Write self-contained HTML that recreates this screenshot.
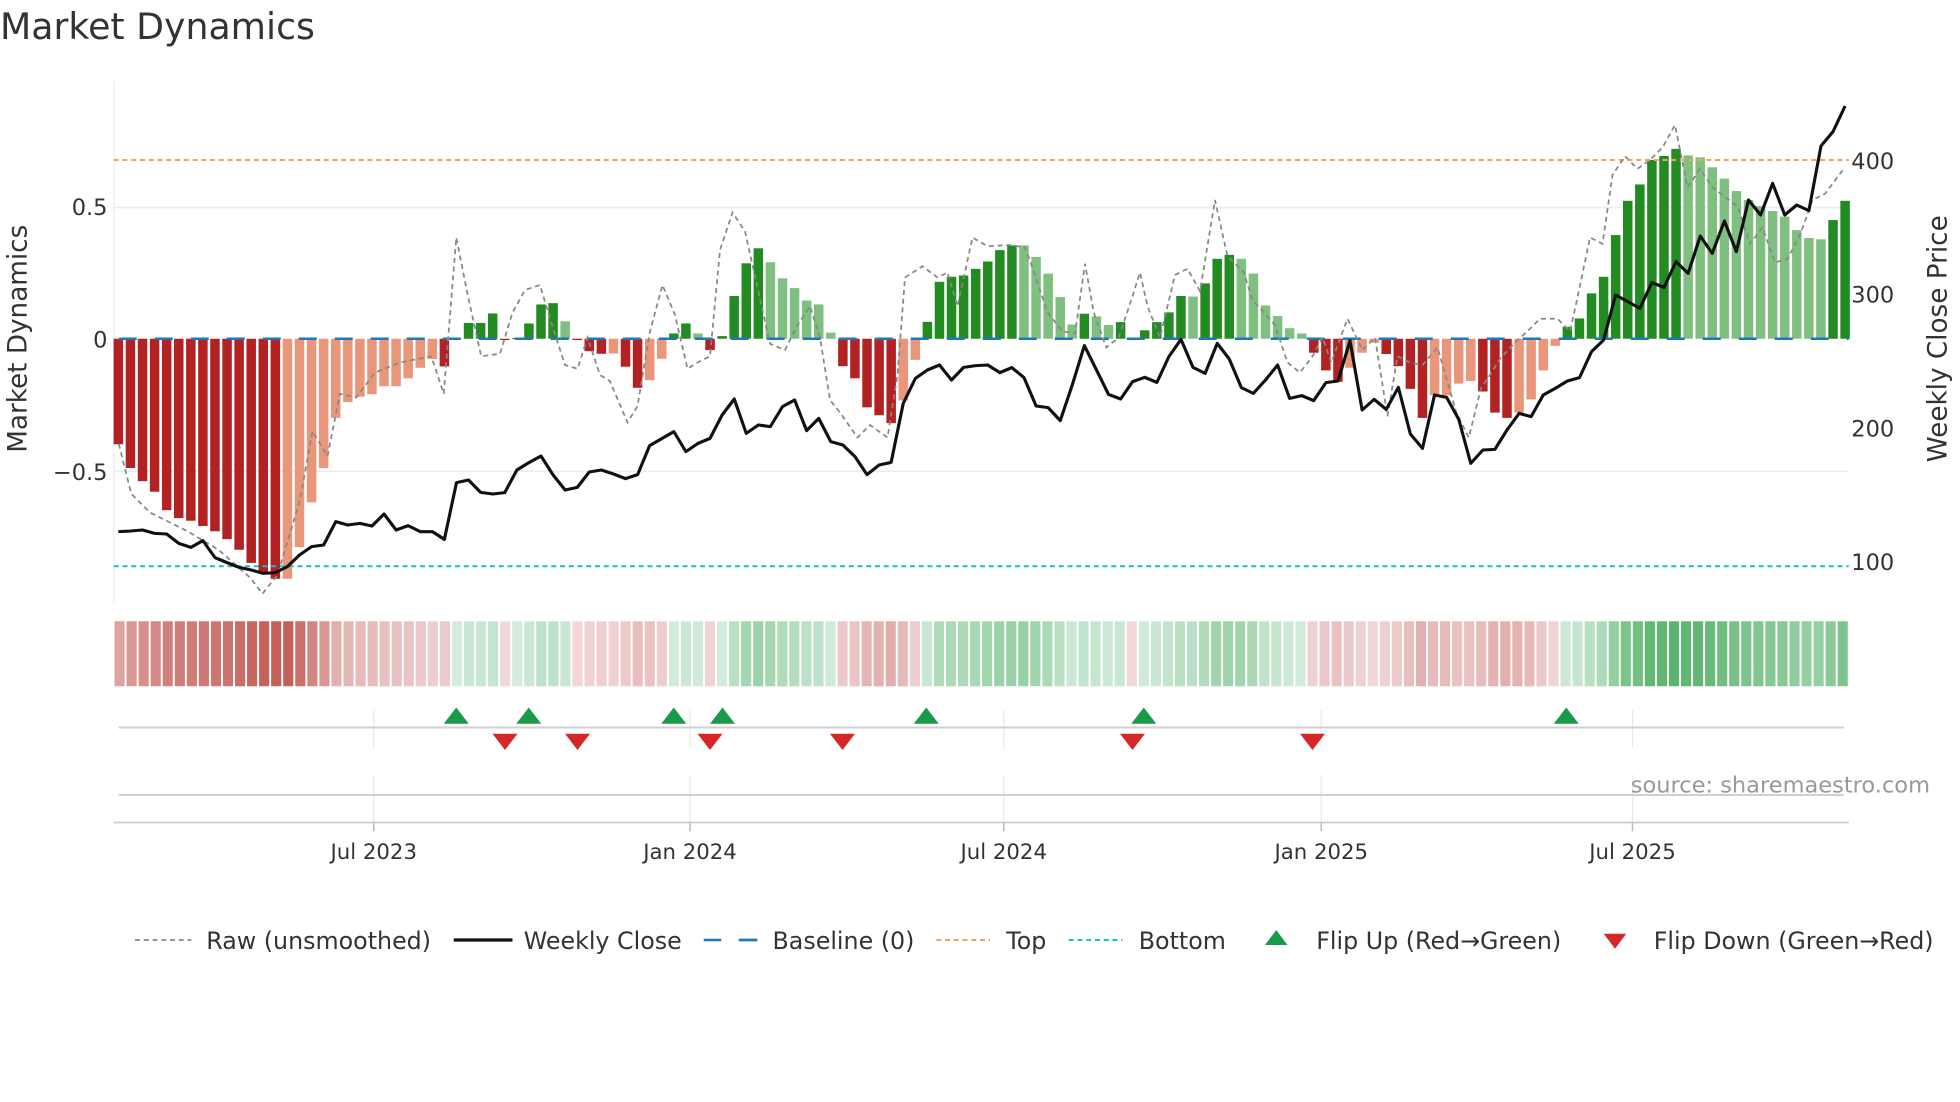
<!DOCTYPE html>
<html><head><meta charset="utf-8"><style>
html,body{margin:0;padding:0;background:#fff;}
svg{display:block;}
text{font-family:"DejaVu Sans","Liberation Sans",sans-serif;}
</style></head><body>
<svg id="s" width="1960" height="1102" viewBox="0 0 1568 881.6" preserveAspectRatio="none" xmlns="http://www.w3.org/2000/svg">
<rect width="1568" height="882" fill="#fff"/>
<text x="0" y="31" font-size="29" fill="#333">Market Dynamics</text>
<line x1="91" y1="65" x2="91" y2="482" stroke="#eeeeee" stroke-width="1"/>
<line x1="91" y1="166" x2="1479" y2="166" stroke="#ececec" stroke-width="1.3"/>
<line x1="91" y1="377" x2="1479" y2="377" stroke="#ececec" stroke-width="1.3"/>
<g id="bars"></g>
<line x1="91" y1="271" x2="1479" y2="271" stroke="#1f77b4" stroke-width="2" stroke-dasharray="14.4 14.4" stroke-dashoffset="-4"/>
<line x1="91" y1="128" x2="1479" y2="128" stroke="#f4a261" stroke-width="1.6" stroke-dasharray="4 3"/>
<line x1="91" y1="453" x2="1479" y2="453" stroke="#17becf" stroke-width="1.6" stroke-dasharray="4 3"/>
<path id="raw" fill="none" stroke="#888" stroke-width="1.4" stroke-dasharray="4 3"/>
<path id="close" fill="none" stroke="#111" stroke-width="2.5" stroke-linejoin="round"/>
<g font-size="18" fill="#333">
<text x="86" y="172" text-anchor="end">0.5</text>
<text x="86" y="278" text-anchor="end">0</text>
<text x="86" y="384" text-anchor="end">−0.5</text>
<text x="1481" y="135">400</text>
<text x="1481" y="242">300</text>
<text x="1481" y="349">200</text>
<text x="1481" y="456">100</text>
</g>
<text transform="translate(21,271) rotate(-90)" font-size="21" fill="#333" text-anchor="middle">Market Dynamics</text>
<text transform="translate(1557,271) rotate(-90)" font-size="21" fill="#333" text-anchor="middle">Weekly Close Price</text>
<g id="strip"></g>
<g stroke="#e8e8e8" stroke-width="1">
<line x1="299" y1="568" x2="299" y2="598"/><line x1="552" y1="568" x2="552" y2="598"/><line x1="803" y1="568" x2="803" y2="598"/><line x1="1057" y1="568" x2="1057" y2="598"/><line x1="1306" y1="568" x2="1306" y2="598"/>
<line x1="299" y1="620" x2="299" y2="658"/><line x1="552" y1="620" x2="552" y2="658"/><line x1="803" y1="620" x2="803" y2="658"/><line x1="1057" y1="620" x2="1057" y2="658"/><line x1="1306" y1="620" x2="1306" y2="658"/>
</g>
<line x1="95" y1="582" x2="1475" y2="582" stroke="#d0d0d0" stroke-width="1.6"/>
<line x1="95" y1="636" x2="1475" y2="636" stroke="#d0d0d0" stroke-width="1.6"/>
<line x1="91" y1="658" x2="1479" y2="658" stroke="#cccccc" stroke-width="1.4"/>
<g stroke="#bbb" stroke-width="1.2">
<line x1="299" y1="658" x2="299" y2="665"/><line x1="552" y1="658" x2="552" y2="665"/><line x1="803" y1="658" x2="803" y2="665"/><line x1="1057" y1="658" x2="1057" y2="665"/><line x1="1306" y1="658" x2="1306" y2="665"/>
</g>
<g id="tri"></g>
<text x="1544" y="634" font-size="18" fill="#999" text-anchor="end">source: sharemaestro.com</text>
<g font-size="17" fill="#333" text-anchor="middle">
<text x="299" y="687">Jul 2023</text><text x="552" y="687">Jan 2024</text><text x="803" y="687">Jul 2024</text><text x="1057" y="687">Jan 2025</text><text x="1306" y="687">Jul 2025</text>
</g>
<g font-size="19" fill="#333">
<line x1="108" y1="752" x2="153" y2="752" stroke="#888" stroke-width="1.4" stroke-dasharray="4 3"/>
<text x="165" y="759">Raw (unsmoothed)</text>
<line x1="363" y1="752" x2="410" y2="752" stroke="#111" stroke-width="2.6"/>
<text x="419" y="759">Weekly Close</text>
<line x1="563" y1="752" x2="606" y2="752" stroke="#1f77b4" stroke-width="2" stroke-dasharray="14 14"/>
<line x1="592" y1="752" x2="606" y2="752" stroke="#1f77b4" stroke-width="2"/>
<text x="618" y="759">Baseline (0)</text>
<line x1="749" y1="752" x2="792" y2="752" stroke="#f4a261" stroke-width="1.6" stroke-dasharray="4 3"/>
<text x="805" y="759">Top</text>
<line x1="855" y1="752" x2="898" y2="752" stroke="#17becf" stroke-width="1.6" stroke-dasharray="4 3"/>
<text x="911" y="759">Bottom</text>
<polygon points="1012,756 1030,756 1021,744" fill="#1a9a48"/>
<text x="1053" y="759">Flip Up (Red→Green)</text>
<polygon points="1283,747 1301,747 1292,759" fill="#d62728"/>
<text x="1323" y="759">Flip Down (Green→Red)</text>
</g>
</svg>
<script>
(function(){
var NS="http://www.w3.org/2000/svg";
var v=[-0.40,-0.49,-0.54,-0.58,-0.65,-0.68,-0.69,-0.71,-0.73,-0.76,-0.80,-0.85,-0.89,-0.91,-0.91,-0.79,-0.62,-0.49,-0.30,-0.24,-0.22,-0.21,-0.18,-0.18,-0.15,-0.11,-0.077,-0.105,
0.003,0.06,0.06,0.096,-0.005,0.003,0.058,0.13,0.135,0.066,-0.005,-0.047,-0.057,-0.056,-0.106,-0.186,-0.157,-0.076,0.02,0.058,0.02,-0.043,0.01,0.162,0.286,0.343,0.29,0.229,0.192,0.145,0.13,0.023,-0.104,-0.15,-0.26,-0.29,-0.32,-0.234,-0.08,
0.064,0.216,0.235,0.24,0.265,0.293,0.336,0.354,0.354,0.31,0.247,0.158,0.054,0.095,0.085,0.052,0.063,-0.005,0.032,0.063,0.1,0.162,0.16,0.21,0.303,0.318,0.303,0.247,0.126,0.086,0.04,0.02,
-0.053,-0.12,-0.163,-0.11,-0.053,-0.015,-0.058,-0.104,-0.19,-0.30,-0.214,-0.215,-0.17,-0.16,-0.20,-0.28,-0.30,-0.28,-0.23,-0.12,-0.027,
0.045,0.077,0.172,0.235,0.393,0.523,0.585,0.678,0.693,0.72,0.695,0.688,0.65,0.607,0.56,0.526,0.503,0.484,0.463,0.412,0.382,0.377,0.45,0.523];
var t="DDDDDDDDDDDDDDLLLLLLLLLLLLLD"+"GGGGDGGGGgDDDLDDLLGGgDGGGGggggggDDDDDLL"+"GGGGGGGG"+"ggggg"+"G"+"gg"+"G"+"D"+"GGGG"+"g"+"GGG"+"gggggg"+"DDDLLLDDDDLLLLDDDLLLL"+"GGGGGGGGGGggggggggggggGG";
var col={D:"#b22222",L:"#e9967a",G:"#228b22",g:"#7fbf7f"};
var c=[425.3,424.8,424,426.7,427.2,434.7,437.9,432.5,446.1,450.1,453.9,456,458.7,458.1,453.3,444,437.3,436,417.3,420,418.7,420.8,411.2,424,420.5,425.3,425.3,431.5,
386.1,384,393.9,395.2,394.1,376,370.1,364.8,380,392,389.9,377.6,376,379.2,382.9,379.7,356.5,350.9,345.3,361.3,354.7,350.7,332,319.2,346.7,340,341.3,325.3,320,344.5,334.7,353.3,356,365.3,379.7,372,369.9,322.7,302.7,
296,292,304,293.9,292.5,292,298.1,294.1,302.1,324.8,326.1,336.5,308,276.5,296,315.5,319.2,305.3,301.9,305.9,285.3,271.5,293.9,298.7,274.7,287.2,310.1,314.7,304,292,318.7,316.5,320.5,306.1,304.8,272.5,328,319.5,
327.5,309.9,347.2,358.7,316,317.9,335.5,370.7,360,359.5,344,330.7,333.3,316,310.7,304.8,302.1,281.3,272,236,241.3,246.7,226.1,229.9,209.3,218.7,188.8,202.7,176.8,201.3,160,172,146.7,172,164,168.5,116.8,105.3,84.8];
var bars=document.getElementById("bars"),strip=document.getElementById("strip");
function mix(a,b,k){return "rgb("+a.map(function(x,i){return Math.round(x+(b[i]-x)*k)}).join(",")+")";}
var pts=[];
for(var i=0;i<v.length;i++){
 var x=94.7+9.66*i, y0=271, h=v[i]*211;
 var r=document.createElementNS(NS,"rect");
 r.setAttribute("x",x-3.8);r.setAttribute("width",7.6);
 r.setAttribute("y",h>0?y0-h:y0);r.setAttribute("height",Math.max(Math.abs(h),0.8));
 r.setAttribute("fill",col[t[i]]||(v[i]<0?"#b22222":"#228b22"));bars.appendChild(r);
 var s=document.createElementNS(NS,"rect");
 s.setAttribute("x",91+9.64*i+0.6);s.setAttribute("width",8.1);s.setAttribute("y",497);s.setAttribute("height",52);
 var fc=v[i]<0?mix([241,216,216],[196,96,90],Math.min(1,-v[i]/0.9)):mix([212,236,220],[92,181,110],Math.min(1,v[i]/0.72));
 s.setAttribute("fill",fc);strip.appendChild(s);
 if(i<c.length)pts.push(x.toFixed(1)+","+c[i]);
}
document.getElementById("close").setAttribute("d","M"+pts.join(" L"));
var raw=[[95,355],[105,395],[120,410],[150,425],[175,440],[200,462],[210,475],[222,460],[240,400],[250,345],[262,365],[272,315],[285,318],[300,298],[320,290],[345,285],[355,315],[365,190],[375,240],[385,285],[400,283],[410,250],[420,232],[432,228],[440,255],[452,292],[462,295],[470,270],[480,300],[488,305],[502,338],[510,325],[520,265],[530,228],[540,252],[550,295],[558,290],[568,285],[576,200],[586,170],[596,185],[606,230],[616,275],[628,280],[638,260],[648,245],[656,270],[664,320],[672,330],[686,350],[696,340],[710,350],[718,300],[724,222],[738,213],[750,222],[758,218],[766,245],[778,190],[790,197],[808,196],[820,198],[828,220],[838,250],[850,265],[860,267],[868,211],[875,250],[885,278],[895,270],[905,240],[912,218],[918,245],[928,270],[940,220],[950,215],[960,233],[972,160],[982,205],[995,218],[1002,240],[1020,260],[1030,290],[1040,298],[1050,285],[1058,270],[1065,290],[1078,255],[1090,280],[1100,270],[1110,333],[1118,285],[1128,290],[1138,292],[1150,278],[1165,330],[1175,350],[1185,310],[1192,300],[1200,287],[1214,272],[1222,265],[1232,255],[1246,255],[1256,265],[1262,238],[1272,190],[1282,195],[1290,140],[1300,125],[1310,135],[1320,128],[1330,118],[1340,100],[1350,150],[1360,135],[1370,150],[1390,165],[1400,195],[1410,182],[1420,210],[1430,207],[1440,188],[1450,160],[1460,155],[1475,135]];
document.getElementById("raw").setAttribute("d","M"+raw.map(function(p){return p.join(",")}).join(" L"));
var tri=document.getElementById("tri"),h="";
[365,423,539,578,741,915,1253].forEach(function(x){h+='<polygon points="'+(x-10)+',579 '+(x+10)+',579 '+x+',566" fill="#1a9a48"/>';});
[404,462,568,674,906,1050].forEach(function(x){h+='<polygon points="'+(x-10)+',587 '+(x+10)+',587 '+x+',600" fill="#d62728"/>';});
tri.innerHTML=h;
})();
</script>
</body></html>
